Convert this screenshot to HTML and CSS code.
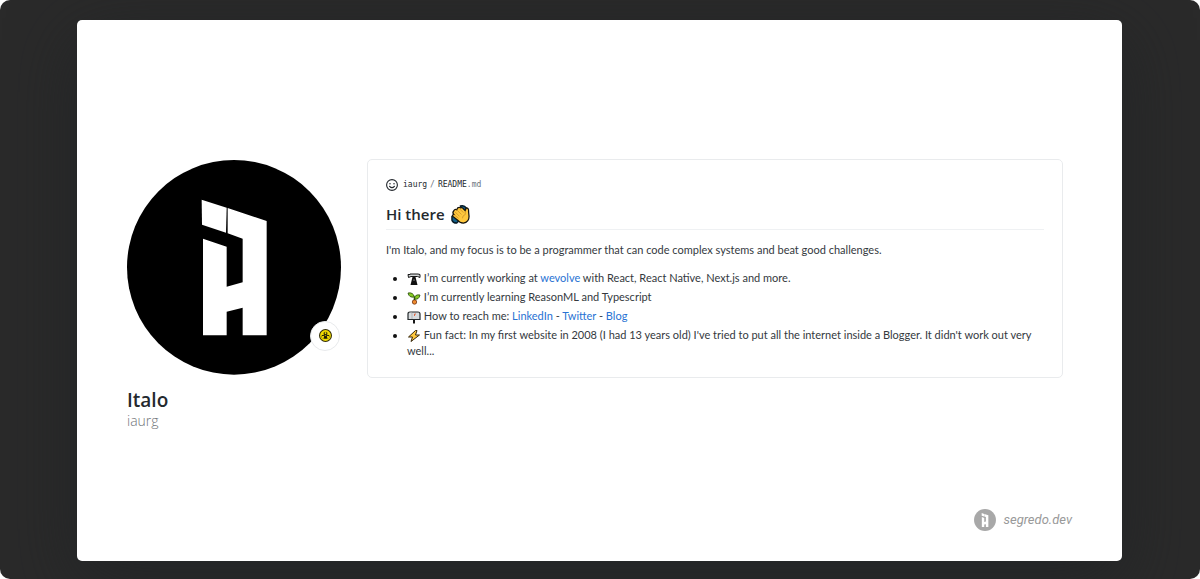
FILE: index.html
```html
<!DOCTYPE html>
<html lang="en">
<head>
<meta charset="utf-8">
<title>Italo (iaurg)</title>
<link rel="stylesheet" href="styles.css">
</head>
<body>
<div class="backdrop">
  <div class="sheet">
    <main class="profile">
      <section class="person">
        <div class="avatar">
          <svg class="avatar-image" viewBox="0 0 642 644" role="img" aria-label="Italo avatar">
            <ellipse cx="321" cy="322" rx="321" ry="322" fill="#000"/>
            <g id="mark" fill="#fff">
              <path d="M224 119 299 143 297 218 225 194Z"/>
              <path d="M302 144 419 183V526H347V443L299 455V526H228V236L299 260V380L347 367V236L302 220Z"/>
            </g>
          </svg>
          <span class="status">
            <svg viewBox="0 0 24 24" role="img" aria-label="Biohazard">
              <circle cx="12" cy="12" r="11" fill="#f3dc00" stroke="#332f10" stroke-width="2"/>
              <g fill="none" stroke="#17150a" stroke-width="2">
                <circle cx="12" cy="8" r="2.600"/>
                <circle cx="8" cy="14" r="2.600"/>
                <circle cx="16" cy="14" r="2.600"/>
              </g>
              <path d="M9.500 4h5l-1 3h-3zM4 14l3-1 2 3-2 2zM20 14l-3-1-2 3 2 2z" fill="#f3dc00"/>
              <path d="m12 12-3 6h6z" fill="#17150a"/>
            </svg>
          </span>
        </div>
        <h1 class="name">Italo</h1>
        <p class="login">iaurg</p>
      </section>
      <article class="readme">
        <div class="file">
          <svg class="smiley" viewBox="0 0 16 16" fill="none" stroke="#24292e" stroke-width="1.500" aria-hidden="true">
            <circle cx="8" cy="8" r="7.200"/>
            <path d="M4.800 9.700q3.200 3.600 6.400 0" stroke-linecap="round"/>
            <circle cx="5.300" cy="6.300" r="1" fill="#24292e" stroke="none"/>
            <circle cx="10.700" cy="6.300" r="1" fill="#24292e" stroke="none"/>
          </svg>
          <span class="path">iaurg<span class="slash">/</span>README<span class="ext">.md</span></span>
        </div>
        <h2 class="greeting">Hi there
          <svg class="wave" viewBox="0 0 20 20" role="img" aria-label="Waving hand">
            <path d="M10 1q4-1 6 2v4h-4zM1 12l4-1 3 6-2 2q-4 0-5-3z" fill="#12608a" stroke="#071b28" stroke-width="1.500"/>
            <path d="M3 6q1-2 3-1l1-2q2-1 3 0 2-1 3 1l2 2 1-3q3 0 2.500 4l.5 5q0 6-6 7-4 0-6-3L2 12q-1-2 1-2-2-2 0-4Z" fill="#ffc83d" stroke="#15130d" stroke-width="1.300"/>
            <path d="m4 7 5 5M6 5l5 5M9 4l4 4M3 10l5 4M15 6v4q-3 1-3 4" fill="none" stroke="#c98f26" stroke-width=".8"/>
          </svg>
        </h2>
        <p class="intro">I'm Italo, and my focus is to be a programmer that can code complex systems and beat good challenges.</p>
        <ul class="facts">
          <li>
            <svg class="emoji" viewBox="0 0 14 14" role="img" aria-label="Telescope"><path d="M5.500 5h3l2 8h-7z" fill="#111"/><path d="M1 2.500h2V2h8l2 .5v3L10.500 4.500H4L1.500 5.500Z" fill="#d3d6d7" stroke="#161616"/><path d="M6.500 7h1l.5 2H6z" fill="#555"/></svg>
            I’m currently working at <a href="#wevolve">wevolve</a> with React, React Native, Next.js and more.
          </li>
          <li>
            <svg class="emoji" viewBox="0 0 14 14" role="img" aria-label="Seedling"><circle cx="7.500" cy="11" r="2.200" fill="#ef8b2f" stroke="#713411" stroke-width=".8"/><path d="M7.500 9V6" stroke="#244b0b" stroke-width="1.500"/><path d="M7.500 6Q6 1 1 2q1 5 6.500 4ZM7.500 8q0-5 5.500-4-1 5-5.500 4Z" fill="#86cb24" stroke="#26480d" stroke-width=".8"/></svg>
            I’m currently learning ReasonML and Typescript
          </li>
          <li>
            <svg class="emoji" viewBox="0 0 14 14" role="img" aria-label="Mailbox"><path d="M7 9v4.500" stroke="#171717" stroke-width="2"/><path d="M1 9.500V4q0-2 2-2h8q2 0 2 2v5.500Z" fill="#d7dbde" stroke="#24292b" stroke-width="1.200"/><path d="M5 9V4Q5 2 3 2" fill="none" stroke="#aaa" stroke-width=".8"/><path d="M7.500 6V4h1.500" fill="none" stroke="#de6845"/></svg>
            How to reach me: <a href="#linkedin">LinkedIn</a> - <a href="#twitter">Twitter</a> - <a href="#blog">Blog</a>
          </li>
          <li>
            <svg class="emoji" viewBox="0 0 14 14" role="img" aria-label="Lightning"><path d="M8.500 1.500 1.500 8h4L4 12.500l8.500-6.500H8.500L10 1.500Z" fill="#ffc83d" stroke="#38280c" stroke-linejoin="round"/></svg>
            Fun fact: In my first website in 2008 (I had 13 years old) I've tried to put all the internet inside a Blogger. It didn't work out very well...
          </li>
        </ul>
      </article>
    </main>
    <footer class="brand">
      <svg class="brand-mark" viewBox="0 0 642 644" aria-hidden="true"><circle cx="321" cy="322" r="321" fill="#a8a8a8"/><use href="#mark"/></svg>
      <span>segredo.dev</span>
    </footer>
  </div>
</div>
</body>
</html>
```
FILE: styles.css
```css
* { box-sizing: border-box; }

body {
  margin: 0;
  background: #fff;
  color: #24292e;
  font-family: Lato, "Open Sans", sans-serif;
  font-size: 11px;
  line-height: 16px;
}

h1, h2, p, ul { margin: 0; }

.backdrop {
  display: flex;
  min-height: 100vh;
  padding: 20px 78px 18px 77px;
  overflow: hidden;
  border-radius: 10px;
  background: #2a2a2a;
}

.sheet {
  display: flex;
  flex: 1;
  flex-direction: column;
  justify-content: space-between;
  padding: 139px 50px 30px;
  border-radius: 5px;
  background: #fff;
  box-shadow: 0 20px 68px rgba(32, 35, 37, 0.8);
}

.profile {
  display: flex;
  align-items: flex-start;
  gap: 26px;
  padding-right: 9px;
}

.person {
  flex: none;
  width: 214px;
  padding-top: 1px;
}

.avatar {
  position: relative;
  margin-bottom: 12px;
}

.avatar-image { display: block; width: 100%; }

.status {
  position: absolute;
  right: 1px;
  bottom: 24px;
  display: grid;
  width: 30px;
  height: 30px;
  place-items: center;
  border: 1px solid #e8eaec;
  border-radius: 50%;
  background: #fff;
}

.status svg { width: 13px; height: 13px; }

.name {
  font-family: "Open Sans", sans-serif;
  font-size: 19px;
  font-weight: 600;
  line-height: 26px;
}

.login {
  color: #707478;
  font-family: "Open Sans", sans-serif;
  font-size: 14px;
  font-weight: 300;
  line-height: 16px;
}

.readme {
  flex: 1;
  min-width: 0;
  padding: 18px;
  border: 1px solid #e9ebed;
  border-radius: 5px;
}

.file {
  display: flex;
  align-items: center;
  gap: 5px;
  height: 14px;
}

.smiley { width: 12px; height: 12px; }

.path {
  font-family: "DejaVu Sans Mono", monospace;
  font-size: 8px;
}

.slash { padding: 0 3px; color: #6a737d; }
.ext { color: #6a737d; }

.greeting {
  display: flex;
  align-items: center;
  gap: 6px;
  margin: 12px 0;
  padding-bottom: 4px;
  border-bottom: 1px solid #eff1f3;
  font-family: "Open Sans", sans-serif;
  font-size: 15px;
  font-weight: 600;
  line-height: 21px;
}

.wave { width: 19px; height: 19px; }

.intro { margin-bottom: 12px; }

.intro, .facts { color: #34393e; }

.facts { padding-left: 21px; }
.facts li + li { margin-top: 3px; }
.facts li::marker { color: #111; }

.facts a { color: #2872d3; text-decoration: none; }

.emoji {
  width: 14px;
  height: 14px;
  vertical-align: -4px;
}

.brand {
  display: flex;
  align-items: center;
  align-self: flex-end;
  gap: 7px;
  color: #999;
  font-family: Roboto, sans-serif;
  font-size: 13px;
  font-style: italic;
}

.brand-mark { width: 22px; height: 22px; }
```
